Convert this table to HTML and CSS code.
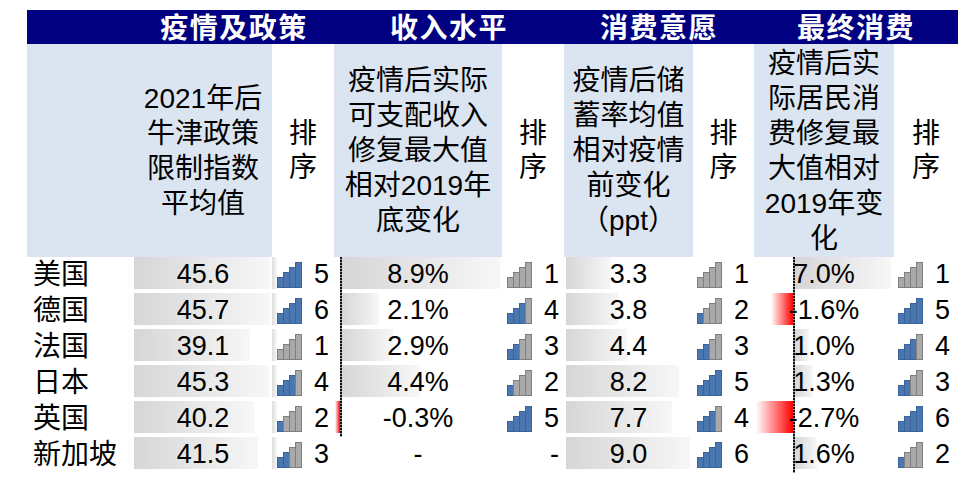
FILE: index.html
```html
<!DOCTYPE html>
<html lang="zh-CN">
<head>
<meta charset="utf-8">
<title>疫情及政策与消费</title>
<link rel="stylesheet" href="styles.css">
</head>
<body>
<div class="sheet">
  <div class="band"></div>
  <div class="grp g1">疫情及政策</div>
  <div class="grp g2">收入水平</div>
  <div class="grp g3">消费意愿</div>
  <div class="grp g4">最终消费</div>

  <div class="hbox h1"><div class="ht">2021年后<br>牛津政策<br>限制指数<br>平均值</div></div>
  <div class="rhead"><div class="ht">排<br>序</div></div>
  <div class="hbox"><div class="ht">疫情后实际<br>可支配收入<br>修复最大值<br>相对2019年<br>底变化</div></div>
  <div class="rhead"><div class="ht">排<br>序</div></div>
  <div class="hbox"><div class="ht">疫情后储<br>蓄率均值<br>相对疫情<br>前变化<br>（ppt）</div></div>
  <div class="rhead"><div class="ht">排<br>序</div></div>
  <div class="hbox"><div class="ht">疫情后实<br>际居民消<br>费修复最<br>大值相对<br>2019年变<br>化</div></div>
  <div class="rhead"><div class="ht">排<br>序</div></div>

  <!-- 美国 -->
  <div class="country">美国</div>
  <div class="val"><div class="bar" style="width:136px"></div><span class="num">45.6</span></div>
  <div class="rank rk1"><span class="ico b4"><i></i><i></i><i></i><i></i></span><span class="rn">5</span></div>
  <div class="val a2"><div class="track"><div class="neg"></div><div class="axis"></div><div class="pos"><div class="bar" style="width:158px"></div></div></div><span class="num">8.9%</span></div>
  <div class="rank rk2"><span class="ico b0"><i></i><i></i><i></i><i></i></span><span class="rn">1</span></div>
  <div class="val v3"><div class="bar" style="width:45px"></div><span class="num">3.3</span></div>
  <div class="rank rk3"><span class="ico b0"><i></i><i></i><i></i><i></i></span><span class="rn">1</span></div>
  <div class="val a4"><div class="track"><div class="neg"></div><div class="axis"></div><div class="pos"><div class="bar" style="width:96px"></div></div></div><span class="num">7.0%</span></div>
  <div class="rank rk4"><span class="ico b0"><i></i><i></i><i></i><i></i></span><span class="rn">1</span></div>

  <!-- 德国 -->
  <div class="country">德国</div>
  <div class="val"><div class="bar" style="width:136px"></div><span class="num">45.7</span></div>
  <div class="rank rk1"><span class="ico b4"><i></i><i></i><i></i><i></i></span><span class="rn">6</span></div>
  <div class="val a2"><div class="track"><div class="neg"></div><div class="axis"></div><div class="pos"><div class="bar" style="width:37px"></div></div></div><span class="num">2.1%</span></div>
  <div class="rank rk2"><span class="ico b3"><i></i><i></i><i></i><i></i></span><span class="rn">4</span></div>
  <div class="val v3"><div class="bar" style="width:52px"></div><span class="num">3.8</span></div>
  <div class="rank rk3"><span class="ico b1"><i></i><i></i><i></i><i></i></span><span class="rn">2</span></div>
  <div class="val a4"><div class="track"><div class="neg"><div class="nbar" style="width:22px"></div></div><div class="axis"></div><div class="pos"></div></div><span class="num">-1.6%</span></div>
  <div class="rank rk4"><span class="ico b4"><i></i><i></i><i></i><i></i></span><span class="rn">5</span></div>

  <!-- 法国 -->
  <div class="country">法国</div>
  <div class="val"><div class="bar" style="width:116px"></div><span class="num">39.1</span></div>
  <div class="rank rk1"><span class="ico b0"><i></i><i></i><i></i><i></i></span><span class="rn">1</span></div>
  <div class="val a2"><div class="track"><div class="neg"></div><div class="axis"></div><div class="pos"><div class="bar" style="width:51px"></div></div></div><span class="num">2.9%</span></div>
  <div class="rank rk2"><span class="ico b2"><i></i><i></i><i></i><i></i></span><span class="rn">3</span></div>
  <div class="val v3"><div class="bar" style="width:61px"></div><span class="num">4.4</span></div>
  <div class="rank rk3"><span class="ico b2"><i></i><i></i><i></i><i></i></span><span class="rn">3</span></div>
  <div class="val a4"><div class="track"><div class="neg"></div><div class="axis"></div><div class="pos"><div class="bar" style="width:14px"></div></div></div><span class="num">1.0%</span></div>
  <div class="rank rk4"><span class="ico b3"><i></i><i></i><i></i><i></i></span><span class="rn">4</span></div>

  <!-- 日本 -->
  <div class="country">日本</div>
  <div class="val"><div class="bar" style="width:135px"></div><span class="num">45.3</span></div>
  <div class="rank rk1"><span class="ico b3"><i></i><i></i><i></i><i></i></span><span class="rn">4</span></div>
  <div class="val a2"><div class="track"><div class="neg"></div><div class="axis"></div><div class="pos"><div class="bar" style="width:78px"></div></div></div><span class="num">4.4%</span></div>
  <div class="rank rk2"><span class="ico b1"><i></i><i></i><i></i><i></i></span><span class="rn">2</span></div>
  <div class="val v3"><div class="bar" style="width:113px"></div><span class="num">8.2</span></div>
  <div class="rank rk3"><span class="ico b4"><i></i><i></i><i></i><i></i></span><span class="rn">5</span></div>
  <div class="val a4"><div class="track"><div class="neg"></div><div class="axis"></div><div class="pos"><div class="bar" style="width:18px"></div></div></div><span class="num">1.3%</span></div>
  <div class="rank rk4"><span class="ico b2"><i></i><i></i><i></i><i></i></span><span class="rn">3</span></div>

  <!-- 英国 -->
  <div class="country">英国</div>
  <div class="val"><div class="bar" style="width:120px"></div><span class="num">40.2</span></div>
  <div class="rank rk1"><span class="ico b1"><i></i><i></i><i></i><i></i></span><span class="rn">2</span></div>
  <div class="val a2"><div class="track"><div class="neg"><div class="nbar" style="width:5px"></div></div><div class="axis"></div><div class="pos"></div></div><span class="num">-0.3%</span></div>
  <div class="rank rk2"><span class="ico b4"><i></i><i></i><i></i><i></i></span><span class="rn">5</span></div>
  <div class="val v3"><div class="bar" style="width:106px"></div><span class="num">7.7</span></div>
  <div class="rank rk3"><span class="ico b3"><i></i><i></i><i></i><i></i></span><span class="rn">4</span></div>
  <div class="val a4"><div class="track"><div class="neg"><div class="nbar" style="width:37px"></div></div><div class="axis"></div><div class="pos"></div></div><span class="num">-2.7%</span></div>
  <div class="rank rk4"><span class="ico b4"><i></i><i></i><i></i><i></i></span><span class="rn">6</span></div>

  <!-- 新加坡 -->
  <div class="country">新加坡</div>
  <div class="val"><div class="bar" style="width:124px"></div><span class="num">41.5</span></div>
  <div class="rank rk1"><span class="ico b2"><i></i><i></i><i></i><i></i></span><span class="rn">3</span></div>
  <div class="val"><span class="num">-</span></div>
  <div class="rank rk2"><span class="ico empty"></span><span class="rn">-</span></div>
  <div class="val v3"><div class="bar" style="width:124px"></div><span class="num">9.0</span></div>
  <div class="rank rk3"><span class="ico b4"><i></i><i></i><i></i><i></i></span><span class="rn">6</span></div>
  <div class="val a4"><div class="track"><div class="neg"></div><div class="axis"></div><div class="pos"><div class="bar" style="width:22px"></div></div></div><span class="num">1.6%</span></div>
  <div class="rank rk4"><span class="ico b1"><i></i><i></i><i></i><i></i></span><span class="rn">2</span></div>
</div>
</body>
</html>
```

FILE: styles.css
```css
* {
  box-sizing: border-box;
}

body {
  margin: 0;
  background: #ffffff;
  color: #000000;
  font-family: "Liberation Sans", "Noto Sans CJK SC", sans-serif;
}

.sheet {
  display: grid;
  grid-template-columns: 107px 138px 62px 168px 62px 129px 61px 140px 64px;
  grid-template-rows: 34px 213px repeat(6, 36px);
  width: 931px;
  margin: 10px 0 0 27px;
}

/* top navy band */
.band {
  grid-row: 1;
  grid-column: 1 / -1;
  background: #000080;
}

.grp {
  grid-row: 1;
  color: #ffffff;
  font-weight: bold;
  font-size: 28px;
  letter-spacing: 1.5px;
  line-height: 34px;
  padding-top: 2px;
  text-align: center;
  white-space: nowrap;
}

.g1 { grid-column: 2 / 4; }
.g2 { grid-column: 4 / 6; }
.g3 { grid-column: 6 / 8; }
.g4 { grid-column: 8 / 10; }

/* header boxes */
.hbox {
  grid-row: 2;
  background: #dbe5f1;
  display: flex;
  flex-direction: column;
  justify-content: center;
  font-size: 28px;
  line-height: 35px;
  text-align: center;
}

.h1 {
  grid-column: 1 / 3;
  padding-left: 107px;
}

.rhead {
  grid-row: 2;
  display: flex;
  flex-direction: column;
  justify-content: center;
  font-size: 28px;
  line-height: 34px;
  text-align: center;
}

/* data rows */
.country {
  font-size: 28px;
  line-height: 36px;
  padding-left: 6px;
  white-space: nowrap;
}

.val {
  display: grid;
  grid-template-columns: 1fr;
  grid-template-rows: 36px;
  font-size: 27px;
}

.val > * {
  grid-area: 1 / 1;
}

.bar {
  height: 32px;
  justify-self: start;
  background: linear-gradient(to right, #d6d6d6, #f7f7f7);
}

.v3 .bar {
  margin-left: 2px;
}

.num {
  justify-self: center;
  line-height: 34px;
  white-space: nowrap;
}

.track {
  display: flex;
  height: 36px;
}

.neg {
  display: flex;
  justify-content: flex-end;
  flex: none;
}

.a2 .neg { width: 6px; }
.a4 .neg { width: 39px; }

.axis {
  width: 2px;
  flex: none;
  background: repeating-linear-gradient(to bottom, #111111 0 2px, #9a9a9a 2px 3px);
}

.pos {
  flex: 1;
}

.nbar {
  height: 32px;
  background: linear-gradient(to right, #ffffff, #ff0000);
}

/* rank cells */
.rank {
  display: flex;
  align-items: flex-start;
  gap: 12px;
  font-size: 27px;
}

.rk1 {
  padding-left: 5px;
  background: linear-gradient(to right, #dcdcdc, #f8f8f8) 0 0 / 5px 32px no-repeat;
}
.rk2 { padding-left: 5px; }
.rk3 { padding-left: 4px; }
.rk4 { padding-left: 4px; }

.ico {
  display: flex;
  align-items: flex-end;
  flex: none;
  width: 25px;
  height: 26px;
  margin-top: 5px;
}

.ico i {
  display: block;
  width: 7px;
  border: 1px solid #7f7f7f;
  background: #a9a9a9;
}

.ico i + i {
  margin-left: -1px;
}

.ico i:nth-child(1) { height: 11px; }
.ico i:nth-child(2) { height: 16px; }
.ico i:nth-child(3) { height: 21px; }
.ico i:nth-child(4) { height: 26px; }

.b1 i:nth-child(-n+1),
.b2 i:nth-child(-n+2),
.b3 i:nth-child(-n+3),
.b4 i {
  background: #4a77b0;
  border-color: #3a6499;
}

.rn {
  width: 15px;
  text-align: right;
  line-height: 34px;
}
```
